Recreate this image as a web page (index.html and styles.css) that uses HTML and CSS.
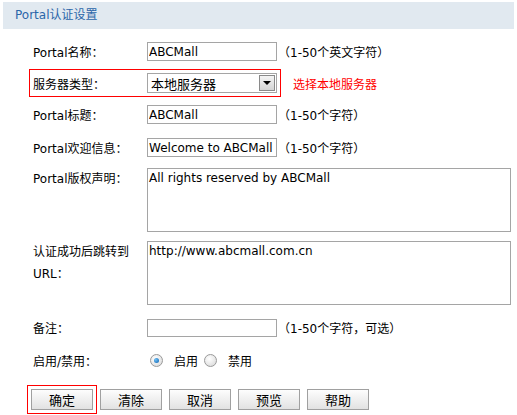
FILE: index.html
```html
<!DOCTYPE html>
<html lang="zh-CN">

<head>
    <meta charset="UTF-8">
    <meta name="viewport" content="width=device-width, initial-scale=1.0">
    <title>Portal认证设置</title>
    <link rel="stylesheet" href="styles.css">
</head>

<body>
    <div class="panel">
        <div class="title">Portal认证设置</div>
        <form class="form">
            <div class="row">
                <label class="label">Portal名称：</label>
                <input class="text" type="text" value="ABCMall">
                <span class="hint">（1-50个英文字符）</span>
            </div>
            <div class="line">
                <div class="row marked">
                    <label class="label">服务器类型：</label>
                    <div class="select"><span>本地服务器</span><i class="arrow"></i></div>
                </div>
                <span class="note">选择本地服务器</span>
            </div>
            <div class="row">
                <label class="label">Portal标题：</label>
                <input class="text" type="text" value="ABCMall">
                <span class="hint">（1-50个字符）</span>
            </div>
            <div class="row">
                <label class="label">Portal欢迎信息：</label>
                <input class="text" type="text" value="Welcome to ABCMall">
                <span class="hint">（1-50个字符）</span>
            </div>
            <div class="row tall first">
                <label class="label">Portal版权声明：</label>
                <textarea class="area">All rights reserved by ABCMall</textarea>
            </div>
            <div class="row tall">
                <label class="label">认证成功后跳转到<br>URL：</label>
                <textarea class="area">http://www.abcmall.com.cn</textarea>
            </div>
            <div class="row after">
                <label class="label">备注：</label>
                <input class="text short" type="text" value="">
                <span class="hint">（1-50个字符，可选）</span>
            </div>
            <div class="row">
                <label class="label">启用/禁用：</label>
                <span class="radio on"></span><span class="opt">启用</span>
                <span class="radio"></span><span class="opt">禁用</span>
            </div>
            <div class="buttons">
                <span class="marked-btn"><button type="button">确定</button></span>
                <button type="button">清除</button>
                <button type="button">取消</button>
                <button type="button">预览</button>
                <button type="button">帮助</button>
            </div>
        </form>
    </div>
</body>

</html>
```

FILE: styles.css
```css
html,
body {
    margin: 0;
    background: #fff;
}

body {
    font-family: "DejaVu Sans", "Noto Sans CJK SC", sans-serif;
    font-size: 12px;
    color: #000;
}

.panel {
    padding: 2px 3px 0;
}

.title {
    height: 27px;
    line-height: 27px;
    padding-left: 12px;
    background: #e1e9f0;
    color: #2b66a9;
    font-size: 12px;
}

.form {
    margin: 0;
    padding: 6px 0 0 26px;
}

.row {
    display: flex;
    align-items: center;
    height: 33px;
    padding-left: 4px;
    box-sizing: border-box;
}

.label {
    width: 114px;
    flex-shrink: 0;
    white-space: nowrap;
}

.text {
    width: 130px;
    height: 19px;
    box-sizing: border-box;
    margin: 0;
    padding: 0 1px;
    border: 1px solid #a5a5a5;
    font-family: inherit;
    font-size: 12px;
    color: #000;
    outline: none;
}

.text.short {
    height: 18px;
}

.hint {
    margin-left: 1px;
}

/* 服务器类型 那一行有红框 */
.line {
    display: flex;
    align-items: center;
    margin-top: 1px;
}

.marked {
    width: 252px;
    height: 28px;
    border: 1px solid #f00;
    padding-left: 3px;
}

.note {
    margin-left: 12px;
    color: #f00;
}

.select {
    width: 130px;
    height: 20px;
    box-sizing: border-box;
    border: 1px solid #a5a5a5;
    display: flex;
    align-items: center;
    justify-content: space-between;
    padding: 0 1px 0 3px;
    font-size: 13px;
}

.arrow {
    width: 16px;
    height: 16px;
    box-sizing: border-box;
    border: 1px solid #8a8a8a;
    background: linear-gradient(#f4f4f4, #d4d4d4);
    display: flex;
    justify-content: center;
    align-items: center;
}

.arrow::after {
    content: "";
    border-left: 4px solid transparent;
    border-right: 4px solid transparent;
    border-top: 4px solid #000;
}

.line + .row {
    margin-top: 1px;
}

.row.tall {
    height: auto;
    align-items: flex-start;
    margin-top: 9px;
}

.row.tall.first {
    margin-top: 4px;
}

.row.tall .label {
    line-height: 22px;
}

.area {
    width: 364px;
    height: 64px;
    box-sizing: border-box;
    margin: 0;
    padding: 2px 1px;
    border: 1px solid #a5a5a5;
    font-family: inherit;
    font-size: 12px;
    line-height: 15px;
    resize: none;
    outline: none;
}

.row.after {
    margin-top: 6px;
}

.radio {
    width: 13px;
    height: 13px;
    box-sizing: border-box;
    border-radius: 50%;
    border: 1px solid #9a9a9a;
    background: radial-gradient(circle at 40% 35%, #fff, #d6d6d6);
    display: flex;
    justify-content: center;
    align-items: center;
    margin-left: 3px;
}

.radio.on::after {
    content: "";
    width: 5px;
    height: 5px;
    border-radius: 50%;
    background: radial-gradient(circle at 35% 35%, #6ec0f5, #0b5fae);
}

.opt {
    margin-left: 11px;
    margin-right: 3px;
}

.buttons {
    display: flex;
    align-items: center;
    gap: 7px;
    margin: 8px 0 0 -2px;
}

.marked-btn {
    border: 1px solid #f00;
    padding: 3px;
    margin-right: -4px;
    display: flex;
}

button {
    width: 62px;
    height: 21px;
    margin: 0;
    padding: 0;
    border: 1px solid #a0a0a0;
    border-radius: 0;
    background: linear-gradient(#fdfdfd, #e2e2e2);
    font-family: inherit;
    font-size: 13px;
    color: #000;
}
```
